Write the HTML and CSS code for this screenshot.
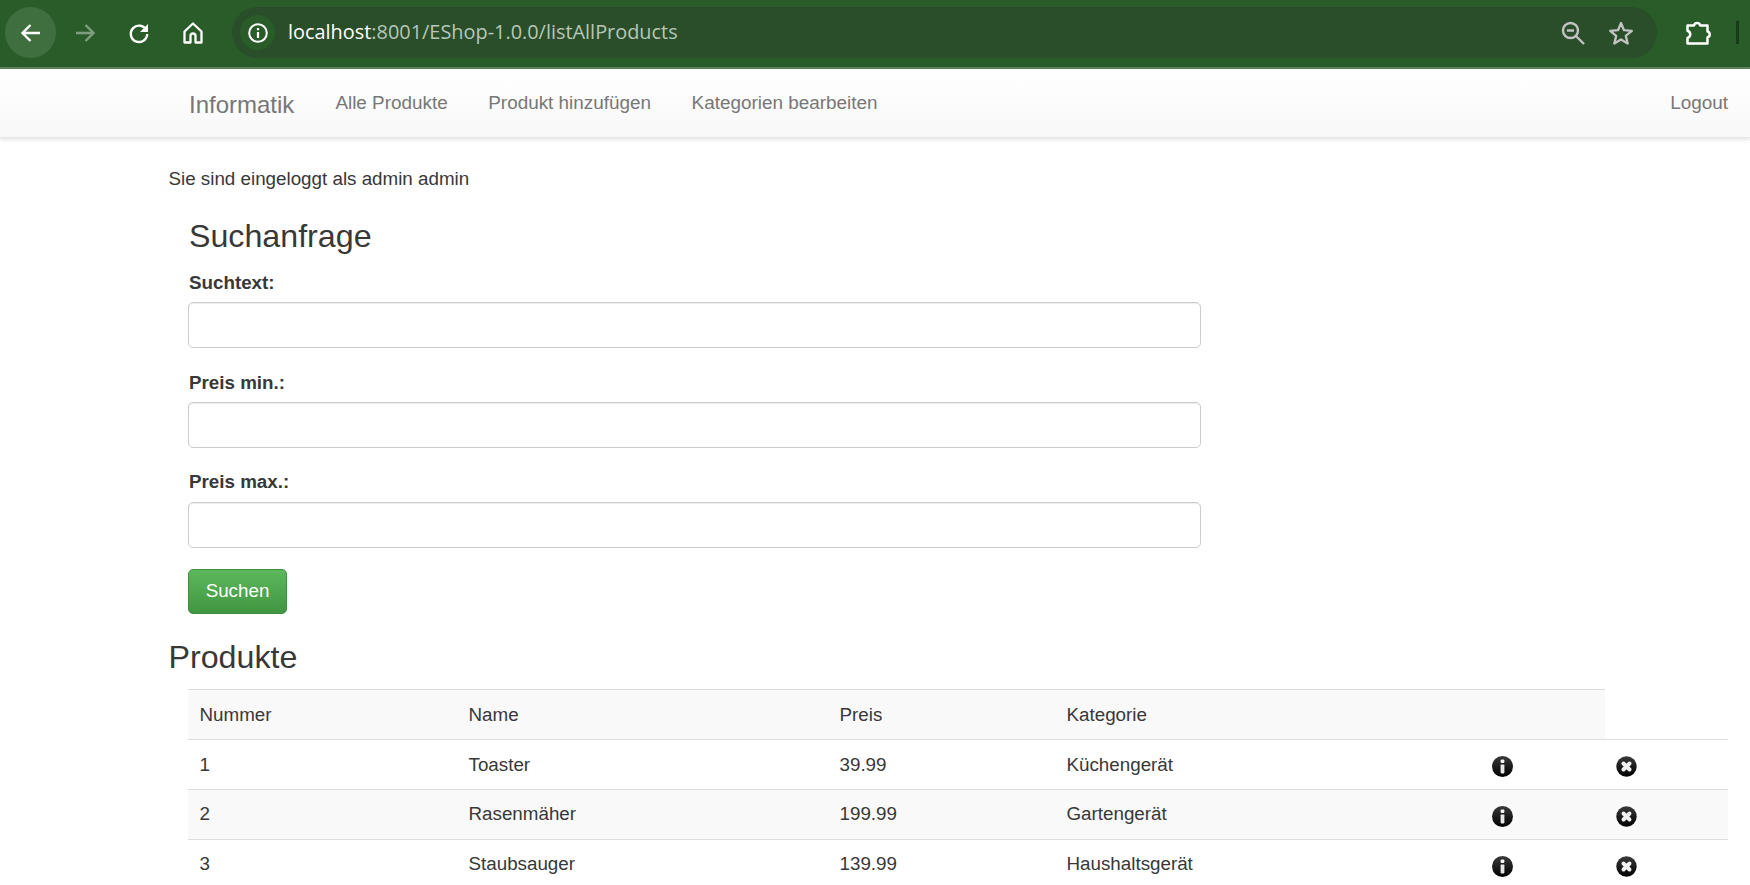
FILE: index.html

```html
<!DOCTYPE html>
<html lang="de">
<head>
  <meta charset="UTF-8">
  <title>Informatik</title>
  <link rel="stylesheet" href="styles.css">
</head>
<body>
  <svg class="defs" width="0" height="0">
    <defs>
      <linearGradient id="ball" x1="0" y1="0" x2="0" y2="1">
        <stop offset="0" stop-color="#3a3a3a"/>
        <stop offset="1" stop-color="#000"/>
      </linearGradient>
      <symbol id="icon-info" viewBox="0 0 21 21">
        <circle cx="10.5" cy="10.5" r="10.5" fill="url(#ball)"/>
        <rect x="8.6" y="3.6" width="3.8" height="3.4" rx="1.2" fill="#fff"/>
        <rect x="8.6" y="8.4" width="3.8" height="9" rx="0.8" fill="#e8e8e8"/>
      </symbol>
      <symbol id="icon-remove" viewBox="0 0 21 21">
        <circle cx="10.5" cy="10.5" r="10.2" fill="url(#ball)"/>
        <path d="M7.500 7.500l6 6M13.500 7.500l-6 6" stroke="#f2f2f2" stroke-width="3.900" stroke-linecap="round"/>
      </symbol>
    </defs>
  </svg>

  <div class="toolbar">
    <div class="tool-btn tool-btn-active">
      <svg width="24" height="24" viewBox="0 0 24 24"><path d="M21 12H4M11.5 4L3.5 12l8 8" fill="none" stroke="#fff" stroke-width="2.4"/></svg>
    </div>
    <div class="tool-btn">
      <svg width="24" height="24" viewBox="0 0 24 24"><path d="M3 12h17M12.5 4l8 8-8 8" fill="none" stroke="#7f9e7f" stroke-width="2.4"/></svg>
    </div>
    <div class="tool-btn">
      <svg width="24" height="24" viewBox="0 0 24 24"><path d="M19.5 9.5A8.2 8.2 0 1 0 20.2 13" fill="none" stroke="#fff" stroke-width="2.4"/><path d="M21 3v8h-8z" fill="#fff"/></svg>
    </div>
    <div class="tool-btn">
      <svg width="24" height="24" viewBox="0 0 24 24"><path d="M12 2.500l-8.500 8V21.500h6v-6.500a2.500 2.500 0 0 1 5 0v6.500h6V10.500z" fill="none" stroke="#fff" stroke-width="2.300" stroke-linejoin="round"/></svg>
    </div>
    <div class="omnibox">
      <div class="site-info">
        <svg width="22" height="22" viewBox="0 0 22 22"><circle cx="11" cy="11" r="8.800" fill="none" stroke="#fff" stroke-width="2"/><path d="M11 10v6M11 6v2.200" stroke="#fff" stroke-width="2.200"/></svg>
      </div>
      <div class="url"><span class="url-host">localhost</span>:8001/EShop-1.0.0/listAllProducts</div>
      <div class="omni-icons">
        <svg width="26" height="26" viewBox="0 0 26 26"><circle cx="10.500" cy="10.500" r="7.500" fill="none" stroke="#c2c2c2" stroke-width="2.400"/><path d="M7 10.500h7M16 16l8 8" stroke="#c2c2c2" stroke-width="2.400"/></svg>
        <svg width="26" height="26" viewBox="0 0 26 26"><path d="M13 3l3 7.200 7.800.600-6 5.100 1.900 7.600L13 19.400l-6.700 4.100 1.900-7.600-6-5.100 7.800-.600z" fill="none" stroke="#c2c2c2" stroke-width="2.300" stroke-linejoin="round"/></svg>
      </div>
    </div>
    <div class="tool-ext">
      <svg width="28" height="28" viewBox="0 0 28 28"><path d="M3.500 6.500h6.500a3.200 3.200 0 0 1 6.200 0h7.300v6a3 3 0 0 1 0 5.800v6.200H3.500v-5.500a3.800 3.800 0 0 0 0-7.300z" fill="none" stroke="#fff" stroke-width="2.500" stroke-linejoin="round"/></svg>
    </div>
    <div class="tool-sep"></div>
  </div>

  <nav class="navbar">
    <a class="brand" href="#">Informatik</a>
    <a class="nav-link" href="#">Alle Produkte</a>
    <a class="nav-link" href="#">Produkt hinzufügen</a>
    <a class="nav-link" href="#">Kategorien bearbeiten</a>
    <a class="nav-link nav-right" href="#">Logout</a>
  </nav>

  <div class="content">
    <p class="login-note">Sie sind eingeloggt als admin admin</p>

    <form class="search">
      <h3>Suchanfrage</h3>
      <div class="field">
        <label for="q">Suchtext:</label>
        <input type="text" id="q">
      </div>
      <div class="field">
        <label for="min">Preis min.:</label>
        <input type="text" id="min">
      </div>
      <div class="field">
        <label for="max">Preis max.:</label>
        <input type="text" id="max">
      </div>
      <button type="button" class="btn-search">Suchen</button>
    </form>

    <h2>Produkte</h2>
    <div class="table-wrap">
      <table>
        <colgroup>
          <col class="c-num"><col class="c-name"><col class="c-price"><col class="c-cat"><col class="c-info"><col class="c-del">
        </colgroup>
        <thead>
          <tr><th>Nummer</th><th>Name</th><th>Preis</th><th>Kategorie</th><th></th></tr>
        </thead>
        <tbody>
          <tr>
            <td>1</td><td>Toaster</td><td>39.99</td><td>Küchengerät</td>
            <td><svg class="ico ico-info"><use href="#icon-info"/></svg></td>
            <td><svg class="ico"><use href="#icon-remove"/></svg></td>
          </tr>
          <tr>
            <td>2</td><td>Rasenmäher</td><td>199.99</td><td>Gartengerät</td>
            <td><svg class="ico ico-info"><use href="#icon-info"/></svg></td>
            <td><svg class="ico"><use href="#icon-remove"/></svg></td>
          </tr>
          <tr>
            <td>3</td><td>Staubsauger</td><td>139.99</td><td>Haushaltsgerät</td>
            <td><svg class="ico ico-info"><use href="#icon-info"/></svg></td>
            <td><svg class="ico"><use href="#icon-remove"/></svg></td>
          </tr>
        </tbody>
      </table>
    </div>
  </div>
</body>
</html>
```

FILE: styles.css

```css
html, body { margin: 0; padding: 0; height: 885px; overflow: hidden; background: #fff; }
body { font-family: "Liberation Sans", Arial, sans-serif; font-size: 18.8px; line-height: 1.41; color: #383838; }
.defs { position: absolute; }

.toolbar { display: flex; align-items: center; height: 65px; background: #2a5c2a; border-bottom: 2px solid #5f875f; padding: 0 0 2px 5px; box-sizing: content-box; }
.tool-btn { width: 52px; height: 52px; border-radius: 50%; display: flex; align-items: center; justify-content: center; margin-right: 2px; }
.tool-btn-active { background: #3f6f3f; height: 51px; width: 51px; margin-right: 3px; }
.omnibox { display: flex; align-items: center; width: 1425px; height: 51px; margin-left: 11px; background: #294e29; border-radius: 26px; padding: 0 8px; box-sizing: border-box; }
.site-info { width: 35px; height: 35px; border-radius: 50%; background: #2a5c2a; display: flex; align-items: center; justify-content: center; margin-right: 13px; }
.url { flex: 1; font-family: "Open Sans", sans-serif; font-size: 19.900px; color: #b7c6b7; }
.url-host { color: #fff; }
.omni-icons { display: flex; gap: 22px; margin-right: 15px; }
.tool-ext { width: 74px; margin-left: 4px; display: flex; justify-content: center; }
.tool-sep { width: 3px; height: 23px; background: #173a17; margin-left: 1px; }

.navbar { display: flex; align-items: center; height: 68px; padding-left: 189px; padding-right: 22px; background: linear-gradient(#fff, #f8f8f8); box-shadow: 0 1px 5px rgba(0,0,0,.15); border-bottom: 1px solid #e7e7e7; }
.navbar a { color: #777; text-decoration: none; }
.brand { font-size: 24px; margin-right: 41px; padding-top: 3px; }
.nav-link { margin-right: 40.500px; font-size: 18.900px; }
.nav-right { margin-left: auto; margin-right: 0; }

.content { padding: 0 22px 0 168.500px; }
.login-note { margin: 28px 0 0; }
.search { padding-left: 19.500px; width: 1013px; }
h3 { font-size: 32.200px; font-weight: 400; line-height: 1.1; margin: 26px 0 16px; padding-left: 1px; color: #383838; }
.field { margin-bottom: 21.200px; }
label { display: block; font-weight: 700; margin-bottom: 6px; padding-left: 1px; }
input { display: block; width: 100%; height: 46px; box-sizing: border-box; border: 1px solid #ccc; border-radius: 5px; background: #fff; box-shadow: inset 0 1px 1px rgba(0,0,0,.075); }
.btn-search { display: block; width: 99px; height: 45px; font: inherit; color: #fff; background: linear-gradient(#5cb85c, #419641); border: 1px solid #3e8f3e; border-radius: 5px; padding: 0; }
h2 { font-size: 32.200px; font-weight: 400; line-height: 1.1; margin: 26.500px 0 13.500px; color: #383838; }

.table-wrap { padding-left: 19.500px; }
table { width: 100%; border-collapse: collapse; table-layout: fixed; }
th, td { padding: 12.500px 11.500px 11.500px; text-align: left; font-weight: 400; box-sizing: border-box; line-height: 24.700px; vertical-align: top; }
th { background: #f9f9f9; border-top: 1px solid #ddd; }
td { border-top: 1px solid #ddd; }
tbody tr:nth-child(even) td { background: #f9f9f9; }
.c-num { width: 269px; }
.c-name { width: 371px; }
.c-price { width: 227px; }
.c-cat { width: 424px; }
.c-info { width: 126px; }
.ico { display: block; width: 21px; height: 21px; margin-top: 3.500px; margin-left: -1px; }
.ico-info { margin-left: 1.500px; }
```
